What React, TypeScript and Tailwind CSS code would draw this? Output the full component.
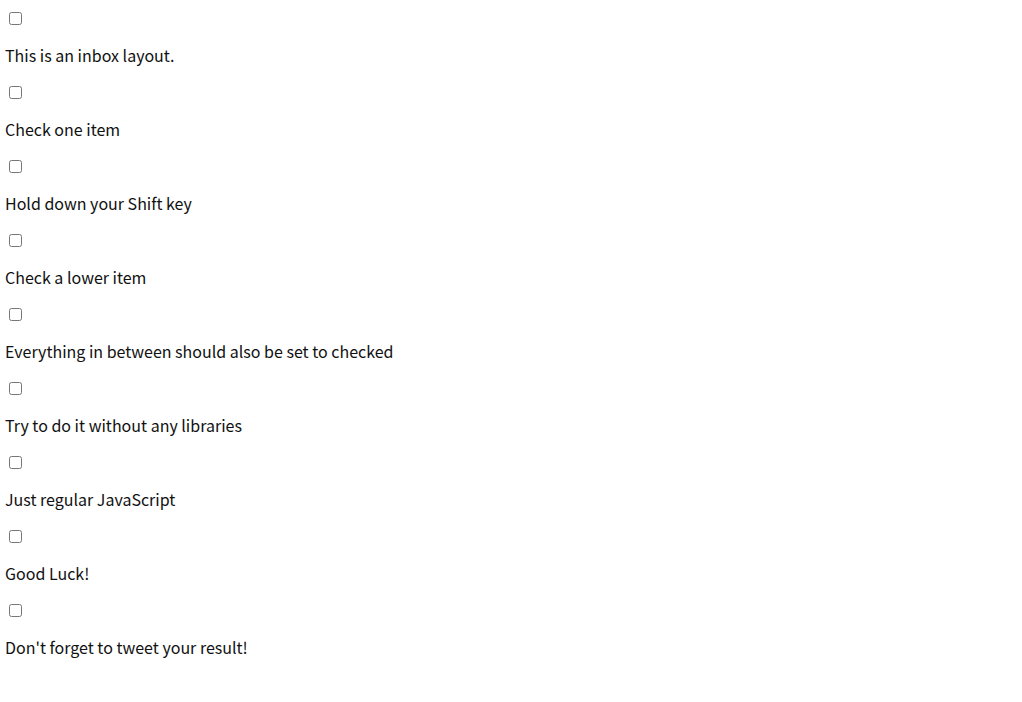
const items = [
  "This is an inbox layout.",
  "Check one item",
  "Hold down your Shift key",
  "Check a lower item",
  "Everything in between should also be set to checked",
  "Try to do it without any libraries",
  "Just regular JavaScript",
  "Good Luck!",
  "Don't forget to tweet your result!",
];

export default function App() {
  return (
    <div className="min-h-screen bg-white text-[#111] text-base" style={{ fontFamily: '"Noto Sans CJK KR", "Noto Sans", sans-serif' }}>
      {items.map((text, i) => (
        <div key={i} className="px-[5px] pt-[12px] pb-[7px]">
          <input type="checkbox" className="block m-0 ml-[4px] w-[13px] h-[13px]" />
          <p className="mt-[18px] leading-6">{text}</p>
        </div>
      ))}
    </div>
  );
}
